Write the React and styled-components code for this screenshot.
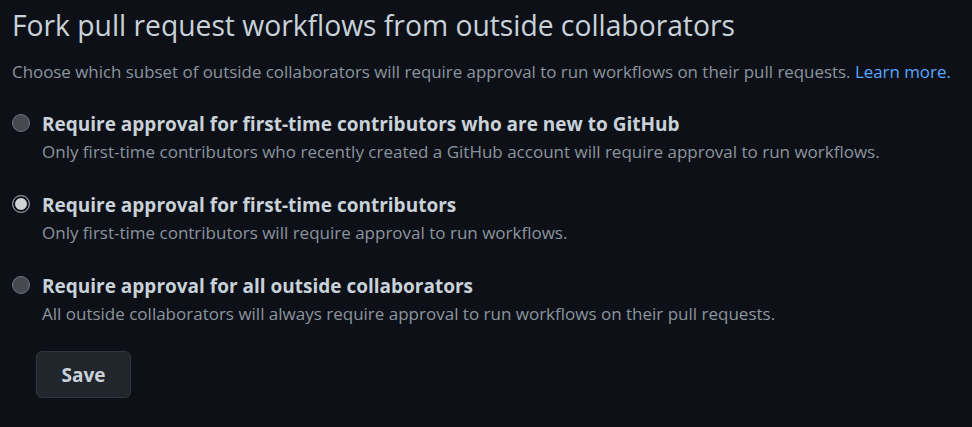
import React, { useState } from 'react'
import styled, { createGlobalStyle } from 'styled-components'

const GlobalStyle = createGlobalStyle`
  html, body {
    margin: 0;
    background: #0d1117;
  }
  body {
    font-family: "Open Sans", "Noto Sans", "Liberation Sans", sans-serif;
    color: #c9d1d9;
  }
`

const Page = styled.div`
  padding: 6px 12px 20px 12px;
  width: 972px;
  height: 427px;
  box-sizing: border-box;
  background: #0d1117;
`

const Heading = styled.h2`
  margin: 0;
  font-size: 28.25px;
  font-weight: 400;
  line-height: 38px;
  color: #c9d1d9;
`

const Description = styled.p`
  margin: 15px 0 0 0;
  font-size: 16.9px;
  line-height: 26px;
  color: #8b949e;
  white-space: nowrap;
`

const Link = styled.a`
  color: #58a6ff;
  text-decoration: none;
`

const Options = styled.div`
  display: flex;
  flex-direction: column;
  gap: 25px;
  margin-top: 24px;
`

const Option = styled.label`
  display: grid;
  grid-template-columns: 30px 1fr;
  cursor: pointer;
`

const Radio = styled.span`
  width: 18px;
  height: 18px;
  margin-top: 5px;
  box-sizing: border-box;
  border-radius: 50%;
  border: 1px solid ${props => props.checked ? '#8b949e' : '#6e7681'};
  background: ${props => props.checked ? '#d0d3d6' : '#464a50'};
  box-shadow: ${props => props.checked ? 'inset 0 0 0 2px #0d1117' : 'none'};
`

const OptionTitle = styled.div`
  font-size: 19px;
  font-weight: 700;
  line-height: 30px;
  color: #c9d1d9;
  white-space: nowrap;
`

const OptionNote = styled.div`
  font-size: 17px;
  line-height: 26px;
  color: #8b949e;
  white-space: nowrap;
`

const Actions = styled.div`
  padding-left: 24px;
  margin-top: 24px;
`

const Button = styled.button`
  height: 47px;
  width: 95px;
  padding: 0;
  border-radius: 6px;
  border: 1px solid #30363d;
  background: #21262d;
  color: #c9d1d9;
  font-family: inherit;
  font-size: 19px;
  font-weight: 700;
  cursor: pointer;
`

const options = [
  {
    title: 'Require approval for first-time contributors who are new to GitHub',
    note: 'Only first-time contributors who recently created a GitHub account will require approval to run workflows.'
  },
  {
    title: 'Require approval for first-time contributors',
    note: 'Only first-time contributors will require approval to run workflows.'
  },
  {
    title: 'Require approval for all outside collaborators',
    note: 'All outside collaborators will always require approval to run workflows on their pull requests.'
  }
]

const App = () => {
  const [selected, setSelected] = useState(1)

  return (
    <Page>
      <GlobalStyle />
      <Heading>Fork pull request workflows from outside collaborators</Heading>
      <Description>
        Choose which subset of outside collaborators will require approval to run workflows on their pull requests. <Link href="#">Learn more.</Link>
      </Description>
      <Options>
        {options.map((o, i) => (
          <Option key={i} onClick={() => setSelected(i)}>
            <Radio checked={selected === i} />
            <div>
              <OptionTitle>{o.title}</OptionTitle>
              <OptionNote>{o.note}</OptionNote>
            </div>
          </Option>
        ))}
      </Options>
      <Actions>
        <Button>Save</Button>
      </Actions>
    </Page>
  )
}

export default App
